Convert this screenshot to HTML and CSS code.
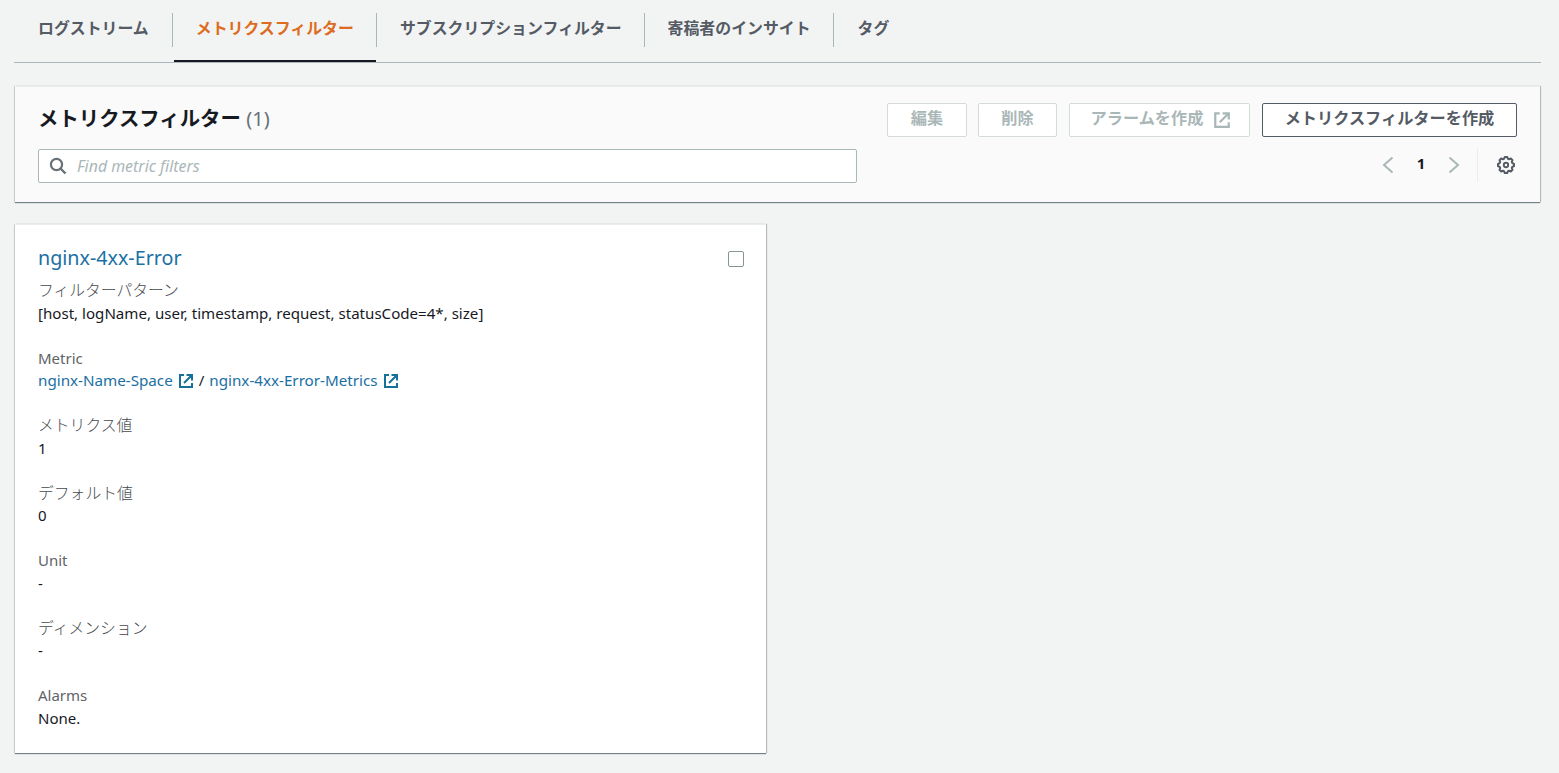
FILE: index.html
```html
<!DOCTYPE html>
<html lang="ja">
<head>
    <meta charset="UTF-8">
    <meta name="viewport" content="width=device-width, initial-scale=1.0">
    <title>メトリクスフィルター</title>
    <link rel="stylesheet" href="styles.css">
</head>
<body>
    <svg class="sprite" width="0" height="0">
        <symbol id="external" viewBox="0 0 16 16">
            <path d="M6 2H2v12h12v-4M8.5 2H14v5.5M6 10l7.5-7.5" fill="none" stroke="currentColor" stroke-width="2"/>
        </symbol>
    </svg>

    <nav class="tabs">
        <a class="tab"><span>ログストリーム</span></a>
        <a class="tab active"><span>メトリクスフィルター</span></a>
        <a class="tab"><span>サブスクリプションフィルター</span></a>
        <a class="tab"><span>寄稿者のインサイト</span></a>
        <a class="tab"><span>タグ</span></a>
    </nav>

    <section class="panel">
        <div class="panel-row">
            <h2 class="panel-title">メトリクスフィルター <span class="count">(1)</span></h2>
            <div class="actions">
                <button class="btn btn-edit" disabled>編集</button>
                <button class="btn btn-delete" disabled>削除</button>
                <button class="btn btn-alarm" disabled>アラームを作成 <svg class="btn-icon"><use href="#external"/></svg></button>
                <button class="btn btn-create">メトリクスフィルターを作成</button>
            </div>
        </div>
        <div class="panel-row tools">
            <div class="search">
                <svg class="search-icon" viewBox="0 0 18 18">
                    <circle cx="7.5" cy="7.5" r="5.6" fill="none" stroke="currentColor" stroke-width="2.2"/>
                    <path d="M11.5 11.5l5 5" stroke="currentColor" stroke-width="2.4"/>
                </svg>
                <input class="search-input" type="text" placeholder="Find metric filters">
            </div>
            <div class="pager">
                <svg class="arrow" viewBox="0 0 12 18"><path d="M10.5 1.5L2 9l8.5 7.5" fill="none" stroke="currentColor" stroke-width="2"/></svg>
                <span class="page">1</span>
                <svg class="arrow" viewBox="0 0 12 18"><path d="M1.5 1.5L10 9l-8.5 7.5" fill="none" stroke="currentColor" stroke-width="2"/></svg>
                <span class="separator"></span>
                <svg class="gear" viewBox="0 0 20 20">
                    <path d="M8 3.8L8.8 2h2.4l.8 1.8 1 .4 1.800-.7 1.700 1.700-.7 1.800.4 1 1.800.8v2.400l-1.800.8-.4 1 .7 1.800-1.700 1.700-1.800-.7-1 .4-.8 1.800H8.800L8 16.200l-1-.4-1.800.7-1.700-1.700.7-1.800-.4-1L2 11.200V8.800L3.800 8l.4-1-.7-1.800 1.700-1.700 1.800.7z" fill="none" stroke="currentColor" stroke-width="2" stroke-linejoin="round"/>
                    <circle cx="10" cy="10" r="2.2" fill="none" stroke="currentColor" stroke-width="1.9"/>
                </svg>
            </div>
        </div>
    </section>

    <article class="card">
        <div class="card-header">
            <a class="card-title">nginx-4xx-Error</a>
            <input class="checkbox" type="checkbox">
        </div>
        <dl class="fields">
            <div class="field">
                <dt class="label label-ja">フィルターパターン</dt>
                <dd class="value pattern">[host, logName, user, timestamp, request, statusCode=4*, size]</dd>
            </div>
            <div class="field">
                <dt class="label">Metric</dt>
                <dd class="value links">
                    <a class="link">nginx-Name-Space <svg class="link-icon"><use href="#external"/></svg></a>
                    <span>/</span>
                    <a class="link">nginx-4xx-Error-Metrics <svg class="link-icon"><use href="#external"/></svg></a>
                </dd>
            </div>
            <div class="field">
                <dt class="label label-ja">メトリクス値</dt>
                <dd class="value">1</dd>
            </div>
            <div class="field">
                <dt class="label label-ja">デフォルト値</dt>
                <dd class="value">0</dd>
            </div>
            <div class="field">
                <dt class="label">Unit</dt>
                <dd class="value">-</dd>
            </div>
            <div class="field">
                <dt class="label label-ja">ディメンション</dt>
                <dd class="value">-</dd>
            </div>
            <div class="field">
                <dt class="label">Alarms</dt>
                <dd class="value">None.</dd>
            </div>
        </dl>
    </article>
</body>
</html>
```
FILE: styles.css
```css
* {
    box-sizing: border-box;
}
body {
    margin: 0;
    padding: 0 18px 0 14px;
    height: 773px;
    overflow: hidden;
    background: #f2f3f3;
    color: #16191f;
    font-family: "Noto Sans", "Noto Sans CJK JP", sans-serif;
    font-size: 15px;
    line-height: 22.6px;
}
.sprite {
    display: block;
}
.tabs {
    display: flex;
    height: 63px;
    padding-top: 13px;
    border-bottom: 1px solid #aab7b8;
    color: #545b64;
    font-size: 15.9px;
    font-weight: 700;
}
.tab {
    display: flex;
    height: 49px;
}
.tab::after {
    content: "";
    width: 1px;
    height: 34px;
    background: #aab7b8;
}
.tab:last-child::after {
    display: none;
}
.tab span {
    height: 49px;
    margin-left: 1px;
    padding: 0 22px;
    line-height: 30px;
    border-bottom: 2px solid transparent;
}
.tab:first-child span {
    padding: 0 23px 0 24px;
    margin-left: 0;
}
.tab.active {
    color: #dd6b20;
}
.tab.active span {
    border-bottom-color: #16191f;
}
.tab:last-child span {
    padding-left: 23px;
}
.panel {
    height: 116px;
    margin: 23px 1px 0;
    padding: 16px 23px 0;
    background: #fafafa;
    border-top: 1px solid #eaeded;
    box-shadow: 0 1px 1px rgba(0, 28, 36, 0.5), 1px 0 1px rgba(0, 28, 36, 0.2), -1px 0 1px rgba(0, 28, 36, 0.1);
}
.panel-row {
    display: flex;
    justify-content: space-between;
}
.panel-title {
    margin: 0;
    font-size: 20.4px;
    line-height: 30px;
    white-space: nowrap;
}
.count {
    color: #687078;
    font-size: 20px;
    font-weight: 400;
}
.actions {
    display: flex;
    gap: 12px;
}
.btn {
    display: flex;
    align-items: center;
    justify-content: center;
    gap: 10px;
    height: 34px;
    padding: 0 0 6px;
    background: #fff;
    border: 1px solid #545b64;
    border-radius: 2px;
    color: #545b64;
    font-family: inherit;
    font-size: 16.2px;
    font-weight: 700;
    white-space: nowrap;
}
.btn:disabled {
    border-color: #d5dbdb;
    color: #aab7b8;
}
.btn-edit {
    width: 80px;
}
.btn-delete {
    width: 79px;
    margin-left: -1px;
}
.btn-alarm {
    width: 181px;
    padding-left: 3px;
}
.btn-create {
    width: 255px;
}
.btn-icon {
    width: 18px;
    height: 18px;
    margin-top: 6px;
}
.tools {
    margin-top: 12px;
}
.search {
    display: flex;
    align-items: center;
    width: 819px;
    height: 34px;
    padding: 0 10px;
    gap: 10px;
    background: #fff;
    border: 1px solid #aab7b8;
    border-radius: 2px;
}
.search-icon {
    width: 18px;
    height: 18px;
    color: #687078;
}
.search-input {
    flex: 1;
    padding: 0;
    border: none;
    outline: none;
    background: none;
    font-family: inherit;
    font-size: 15.9px;
}
.search-input::placeholder {
    color: #aab7b8;
    font-style: italic;
}
.pager {
    display: flex;
    align-items: center;
    height: 32px;
    margin-right: 1px;
}
.arrow {
    width: 12px;
    height: 18px;
    color: #aab7b8;
}
.page {
    width: 54px;
    padding-bottom: 3px;
    text-align: center;
    font-size: 15px;
    font-weight: 700;
}
.separator {
    width: 1px;
    height: 34px;
    margin: 0 18px 0 17px;
    background: #eaeded;
}
.gear {
    width: 20px;
    height: 20px;
    color: #545b64;
}
.card {
    width: 751px;
    height: 529px;
    margin: 22px 0 0 1px;
    padding: 21px 22px 0 23px;
    background: #fff;
    border-top: 1px solid #eaeded;
    box-shadow: 0 1px 1px rgba(0, 28, 36, 0.5), 1px 0 1px rgba(0, 28, 36, 0.2), -1px 0 1px rgba(0, 28, 36, 0.1);
}
.card-header {
    display: flex;
    align-items: center;
    justify-content: space-between;
    height: 25px;
}
.card-title {
    color: #1a6fa3;
    font-size: 19.7px;
}
.checkbox {
    appearance: none;
    width: 16px;
    height: 16px;
    margin: 0;
    border: 1px solid #879596;
    border-radius: 2px;
}
.fields {
    display: flex;
    flex-direction: column;
    gap: 22.4px;
    margin: 8px 0 0;
}
.label {
    color: #606468;
}
.label-ja {
    color: #45494d;
    font-size: 15.8px;
    font-weight: 300;
}
.value {
    margin: 0;
}
.pattern {
    font-size: 15.1px;
}
.links {
    display: flex;
    gap: 5px;
}
.link {
    display: flex;
    align-items: center;
    gap: 5px;
    color: #1a6fa3;
    font-size: 15.2px;
}
.link-icon {
    width: 16px;
    height: 16px;
    margin-top: 2px;
    color: #16719a;
}
```
